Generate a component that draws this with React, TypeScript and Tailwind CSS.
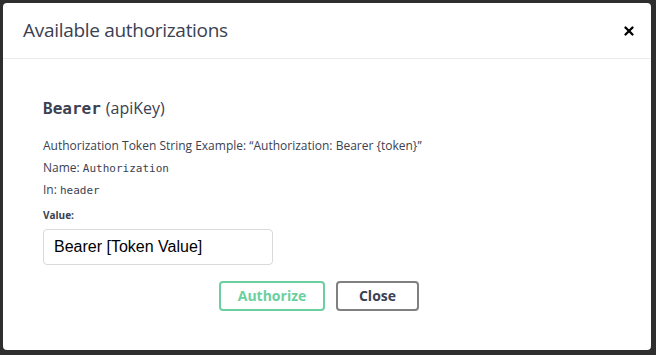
import { X } from "lucide-react";

const sans = "font-['Open_Sans',_'Noto_Sans',_sans-serif]";
const mono = "font-['DejaVu_Sans_Mono',_'Liberation_Mono',_monospace]";

export default function App() {
  return (
    <div className="w-[656px] h-[355px] bg-[#2e2e2e] p-[3px] pr-[5px] pb-[5px]">
      <div className={`h-full bg-white rounded-[4px] flex flex-col text-[#3b4151] ${sans}`}>
        {/* Header */}
        <div className="h-[56px] flex items-center justify-between pl-5 pr-[15px] border-b border-[#ececec]">
          <h3 className="text-[19px] tracking-[-0.3px] text-[#3b4151]">Available authorizations</h3>
          <button className="text-black">
            <X size={14} strokeWidth={4} />
          </button>
        </div>

        {/* Body */}
        <div className="px-10 pt-[37px]">
          <h4 className="text-[16px] font-semibold mb-[14px] flex items-baseline gap-[5px]">
            <code className={`${mono} font-bold text-[16px]`}>Bearer</code>
            <span className="font-normal">(apiKey)</span>
          </h4>
          <div className="text-[12px] leading-[21.5px]">
            <p>Authorization Token String Example: “Authorization: Bearer {"{token}"}”</p>
            <p>
              Name: <code className={`${mono} text-[11px]`}>Authorization</code>
            </p>
            <p>
              In: <code className={`${mono} text-[11px]`}>header</code>
            </p>
          </div>

          <label className="block text-[10px] font-bold mt-[6px] mb-[6px]">Value:</label>
          <input
            readOnly
            value="Bearer [Token Value]"
            className="w-[230px] h-[36px] border border-[#d9d9d9] rounded-[4px] px-[10px] text-[16px] text-black font-['Liberation_Sans',_Arial,_sans-serif] outline-none"
          />

          <div className="flex justify-center gap-[11px] mt-[16px] pr-4">
            <button className="w-[106px] h-[30px] border-2 border-[#6ccf9f] rounded-[4px] text-[#6ccf9f] text-[14px] font-bold">
              Authorize
            </button>
            <button className="w-[83px] h-[30px] border-2 border-[#808080] rounded-[4px] text-[#3b4151] text-[14px] font-bold">
              Close
            </button>
          </div>
        </div>
      </div>
    </div>
  );
}
